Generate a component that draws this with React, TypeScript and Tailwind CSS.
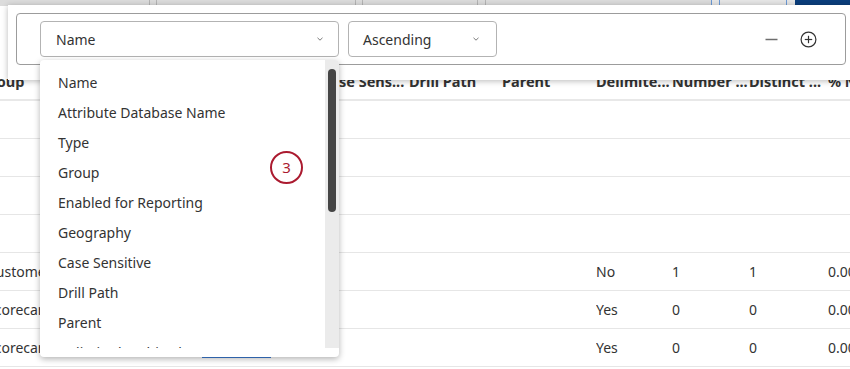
import React from "react";

const font = { fontFamily: '"Noto Sans", "Open Sans", sans-serif' };

function Chevron() {
  return (
    <svg width="6" height="4" viewBox="0 0 6 4" className="shrink-0">
      <polyline points="0.5,0.8 3,3.2 5.5,0.8" fill="none" stroke="#7a7a7a" strokeWidth="1" />
    </svg>
  );
}

const items = [
  "Name",
  "Attribute Database Name",
  "Type",
  "Group",
  "Enabled for Reporting",
  "Geography",
  "Case Sensitive",
  "Drill Path",
  "Parent",
  "Delimited Multi-value",
];

type Row = { a: string; d: string; n: string; di: string; p: string };
const rows: Row[] = [
  { a: "", d: "", n: "", di: "", p: "" },
  { a: "", d: "", n: "", di: "", p: "" },
  { a: "", d: "", n: "", di: "", p: "" },
  { a: "", d: "", n: "", di: "", p: "" },
  { a: "Customer", d: "No", n: "1", di: "1", p: "0.00" },
  { a: "Scorecard", d: "Yes", n: "0", di: "0", p: "0.00" },
  { a: "Scorecard", d: "Yes", n: "0", di: "0", p: "0.00" },
];

const restWidths = ["w-[88px]", "w-[93px]", "w-[94px]", "w-[76px]", "w-[77px]", "w-[79px]", "w-[60px]"];

function Cols({ c, header }: { c: string[]; header?: boolean }) {
  return (
    <div className={`flex items-center ${header ? "ml-[-20px] font-bold" : "ml-[-13px]"}`}>
      <div className={`${header ? "w-[341px]" : "w-[334px]"} shrink-0 whitespace-nowrap overflow-hidden`}>{c[0]}</div>
      {c.slice(1).map((t, i) => (
        <div key={i} className={`${restWidths[i]} shrink-0 whitespace-nowrap overflow-hidden`}>
          {t}
        </div>
      ))}
    </div>
  );
}

export default function App() {
  return (
    <div className="relative w-[850px] h-[369px] overflow-hidden bg-white text-[#333] text-[14px]" style={font}>
      {/* top strip */}
      <div className="flex h-[6px] bg-[#dcdcdc]">
        <div className="w-[150px] border-r border-[#b5b5b5]" />
        <div className="w-[7px] border-r border-[#b5b5b5]" />
        <div className="w-[199px] border-r border-[#b5b5b5]" />
        <div className="w-[7px] border-r border-[#b5b5b5]" />
        <div className="w-[115px] border-r border-[#b5b5b5]" />
        <div className="w-[8px] border-r border-[#b5b5b5]" />
        <div className="w-[226px] border-r border-[#6b9ad6]" />
        <div className="w-[8px] border-r border-[#6b9ad6] bg-[#e6e6e6]" />
        <div className="w-[67px] border-r border-[#6b9ad6] bg-[#e6e6e6]" />
        <div className="w-[8px] bg-[#e6e6e6]" />
        <div className="flex-1 bg-[#0b3e7c]" />
      </div>

      {/* table */}
      <div className="mt-[60px]">
        <div className="h-[35px] flex items-center pb-[1px] border-b-2 border-[#e8e8e8] text-[14.5px]">
          <Cols c={["Group", "Case Sens...", "Drill Path", "Parent", "Delimite...", "Number ...", "Distinct ...", "% N"]} header />
        </div>
        {rows.map((r, i) => (
          <div key={i} className="h-[38px] flex items-center border-b border-[#e6e6e6]">
            <Cols c={[r.a, "", "", "", r.d, r.n, r.di, r.p]} />
          </div>
        ))}
      </div>

      {/* blue underline behind dropdown */}
      <div className="absolute left-[202px] top-[356px] w-[69px] h-[2px] bg-[#3a7bd5]" />

      {/* popover panel */}
      <div className="absolute left-[8px] top-[5px] w-[850px] h-[75px] bg-white shadow-[0_1px_6px_rgba(0,0,0,0.28)] pt-[8px] pl-[8px]">
        <div className="w-[830px] h-[52px] border border-[#9c9c9c] rounded-[4px] flex items-center pl-[23px] pr-[28px]">
          <div className="w-[299px] h-[36px] border border-[#b3b3b3] rounded-[4px] flex items-center justify-between pl-[15px] pr-[15px] text-[14px]">
            <span>Name</span>
            <Chevron />
          </div>
          <div className="ml-[9px] w-[149px] h-[36px] border border-[#b3b3b3] rounded-[4px] flex items-center justify-between pl-[14px] pr-[17px] text-[14px]">
            <span>Ascending</span>
            <Chevron />
          </div>
          <div className="ml-auto flex items-center gap-[22px]">
            <svg width="13" height="13" viewBox="0 0 13 13">
              <line x1="0.5" y1="6.5" x2="12.5" y2="6.5" stroke="#6e6e6e" strokeWidth="1.5" />
            </svg>
            <svg width="17" height="17" viewBox="0 0 17 17">
              <circle cx="8.5" cy="8.5" r="7.4" fill="none" stroke="#333" strokeWidth="1.2" />
              <line x1="8.5" y1="4.8" x2="8.5" y2="12.2" stroke="#333" strokeWidth="1.2" />
              <line x1="4.8" y1="8.5" x2="12.2" y2="8.5" stroke="#333" strokeWidth="1.2" />
            </svg>
          </div>
        </div>
      </div>

      {/* dropdown list */}
      <div className="absolute left-[40px] top-[60px] w-[299px] h-[297px] bg-white rounded-[4px] shadow-[0_2px_6px_rgba(0,0,0,0.3)] flex flex-col overflow-hidden">
        <div className="h-[288px] flex">
          <div className="flex-1 overflow-hidden pt-[7px]">
            {items.map((t) => (
              <div key={t} className="h-[30px] flex items-center pl-[18px] whitespace-nowrap text-[14px] text-[#333]">
                {t}
              </div>
            ))}
          </div>
          <div className="w-[14px] h-[288px] bg-[#ebebeb] pt-[9px] pl-[3px]">
            <div className="w-[8px] h-[143px] rounded-full bg-[#454545]" />
          </div>
        </div>
        <div className="h-[9px]" />
      </div>

      {/* step marker */}
      <div className="absolute left-[270px] top-[151px] w-[33px] h-[33px] rounded-full border-[2.5px] border-[#ab1a2f] flex items-center justify-center text-[15px] text-[#ab1a2f]">
        3
      </div>
    </div>
  );
}
